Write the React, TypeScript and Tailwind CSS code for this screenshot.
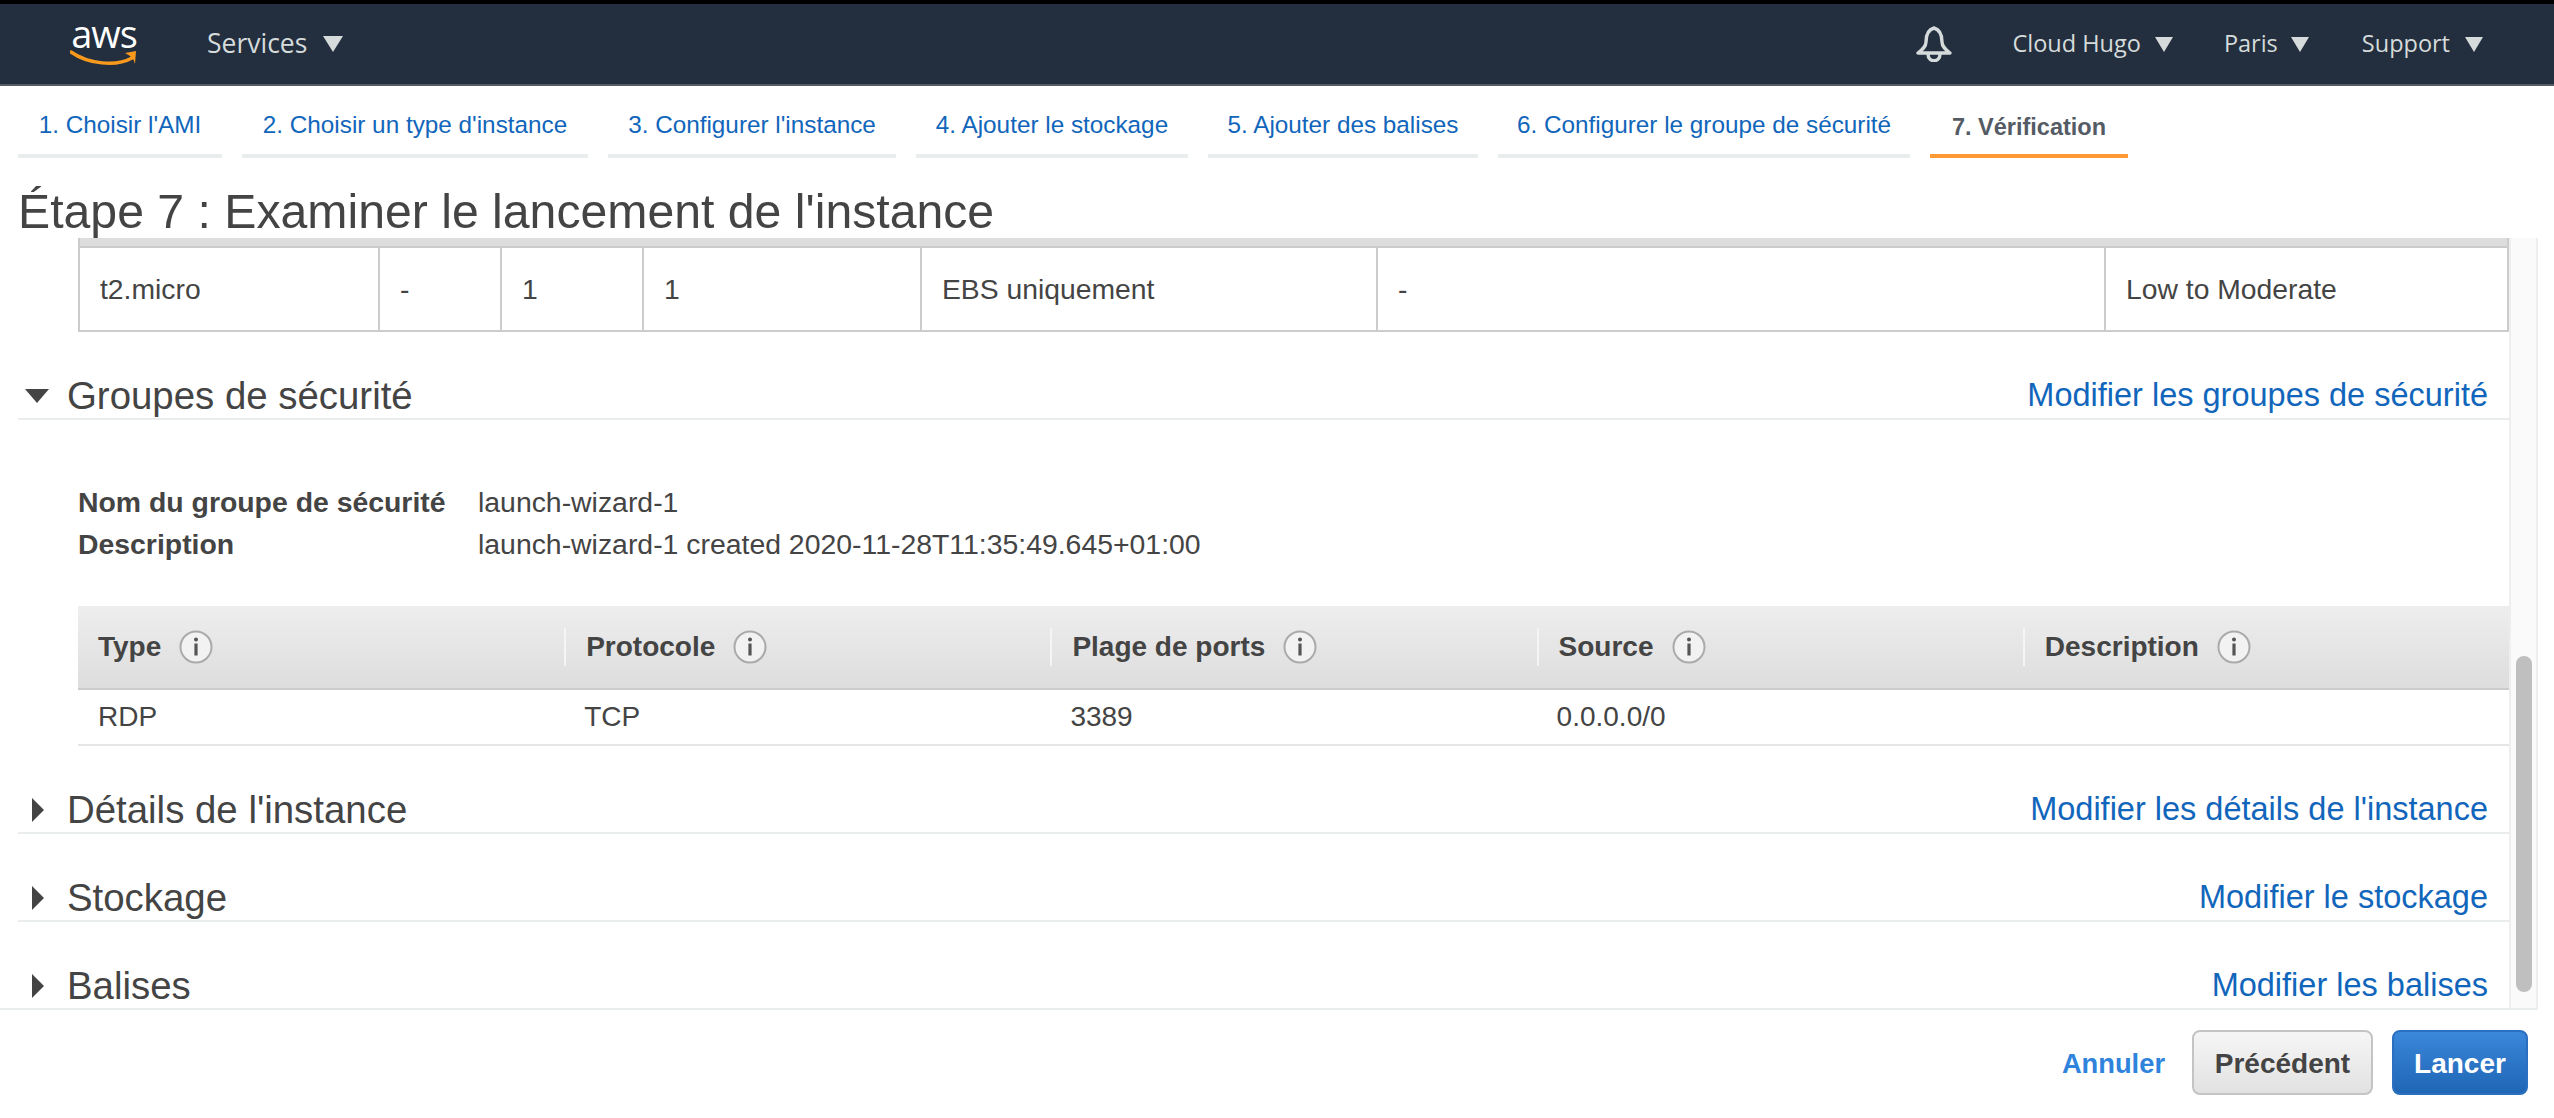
import type { ReactNode } from "react"

const tabs = [
  { label: "1. Choisir l'AMI", width: "w-[204px]" },
  { label: "2. Choisir un type d'instance", width: "w-[346px]" },
  { label: "3. Configurer l'instance", width: "w-[288px]" },
  { label: "4. Ajouter le stockage", width: "w-[272px]" },
  { label: "5. Ajouter des balises", width: "w-[270px]" },
  { label: "6. Configurer le groupe de sécurité", width: "w-[412px]" },
]

const instanceCells = [
  { value: "t2.micro", width: "w-[300px]" },
  { value: "-", width: "w-[122px]" },
  { value: "1", width: "w-[142px]" },
  { value: "1", width: "w-[278px]" },
  { value: "EBS uniquement", width: "w-[456px]" },
  { value: "-", width: "w-[728px]" },
  { value: "Low to Moderate", width: "flex-1" },
]

const ruleHeaders = ["Type", "Protocole", "Plage de ports", "Source", "Description"]
const ruleValues = ["RDP", "TCP", "3389", "0.0.0.0/0", ""]

function Caret() {
  return (
    <svg width="18" height="15" viewBox="0 0 18 15" className="shrink-0">
      <path d="M0 0H18L9 15Z" fill="#d5dbdb" />
    </svg>
  )
}

function AwsLogo() {
  return (
    <div className="flex w-[68px] flex-col items-center">
      <span className="h-[26px] font-['Open_Sans',sans-serif] text-[38px] leading-[24px] tracking-[-1px] text-white">aws</span>
      <svg width="68" height="17" viewBox="0 0 68 17" className="mt-[3px]">
        <path d="M1 2C18 14 46 17 62 8" fill="none" stroke="#f8991d" strokeWidth="3.4" strokeLinecap="round" />
        <path d="M55 3L66 1L65 14C64 9 61 6 55 3Z" fill="#f8991d" />
      </svg>
    </div>
  )
}

function Bell() {
  return (
    <svg width="36" height="36" viewBox="0 0 36 36" fill="none" stroke="#d5dbdb" strokeWidth="3.4">
      <path d="M18 2C11 4 10 10 10 16C10 21 6 24 2 27H34C30 24 26 21 26 16C26 10 25 4 18 2Z" strokeLinejoin="round" />
      <path d="M12 28C12 37 24 37 24 28" />
    </svg>
  )
}

function InfoIcon() {
  return (
    <svg width="34" height="34" viewBox="0 0 34 34" className="shrink-0">
      <circle cx="17" cy="17" r="15.5" fill="#f2f2f2" stroke="#aaaaaa" strokeWidth="2" />
      <circle cx="17" cy="9.5" r="2" fill="#555555" />
      <rect x="15.4" y="13.5" width="3.2" height="12" fill="#555555" />
    </svg>
  )
}

function HeaderMenu({ label, gap }: { label: string; gap: string }) {
  return (
    <div className={`flex items-center ${gap}`}>
      <span className="text-[23.5px] text-[#d5dbdb]">{label}</span>
      <Caret />
    </div>
  )
}

function Section({ title, action, open, children }: { title: string; action: string; open?: boolean; children?: ReactNode }) {
  return (
    <section>
      <div className="flex h-[88px] items-end justify-between border-b-2 border-[#eaeded] pr-[21px]">
        <div className="flex items-center">
          <span className="flex w-[49px] justify-start pl-[7px]">
            {open ? (
              <svg width="24" height="14" viewBox="0 0 24 14">
                <path d="M0 0H24L12 14Z" fill="#444444" />
              </svg>
            ) : (
              <svg width="12" height="24" viewBox="0 0 12 24" className="ml-[7px]">
                <path d="M0 0L12 12L0 24Z" fill="#444444" />
              </svg>
            )}
          </span>
          <h2 className="text-[38.4px] leading-[44px] text-[#444444]">{title}</h2>
        </div>
        <a className="text-[32.5px] leading-[46px] text-[#1166bb]">{action}</a>
      </div>
      {children}
    </section>
  )
}

export default function App() {
  return (
    <div className="flex h-[1118px] w-[2554px] flex-col overflow-hidden border-t-4 border-black bg-white font-['Liberation_Sans',Arial,sans-serif] text-[#444444]">
      <header className="flex h-[82px] shrink-0 items-center justify-between border-b-2 border-[#545b64] bg-[#232f3e] font-['Open_Sans',sans-serif]">
        <div className="flex items-center">
          <div className="ml-[70px]">
            <AwsLogo />
          </div>
          <div className="ml-[69px] flex items-center gap-[16px]">
            <span className="text-[26.5px] text-[#d5dbdb]">Services</span>
            <svg width="20" height="16" viewBox="0 0 20 16">
              <path d="M0 0H20L10 16Z" fill="#d5dbdb" />
            </svg>
          </div>
        </div>
        <div className="mr-[71px] flex items-center">
          <Bell />
          <div className="ml-[60px]">
            <HeaderMenu label="Cloud Hugo" gap="gap-[14px]" />
          </div>
          <div className="ml-[51px]">
            <HeaderMenu label="Paris" gap="gap-[13px]" />
          </div>
          <div className="ml-[53px]">
            <HeaderMenu label="Support" gap="gap-[15px]" />
          </div>
        </div>
      </header>

      <nav className="flex h-[72px] shrink-0 items-end gap-[20px] pl-[18px]">
        {tabs.map((tab) => (
          <a
            key={tab.label}
            className={`flex h-[60px] items-start justify-center whitespace-nowrap border-b-4 border-[#eaeded] pt-[12px] text-[24.3px] leading-[30px] text-[#1166bb] ${tab.width}`}
          >
            {tab.label}
          </a>
        ))}
        <a className="flex h-[60px] w-[198px] items-start justify-center border-b-4 border-[#ff9933] pt-[14px] text-[23.5px] font-bold leading-[30px] text-[#545b64]">
          7. Vérification
        </a>
      </nav>

      <h1 className="h-[80px] shrink-0 pl-[18px] pt-[17px] text-[48.2px] font-normal leading-[72px] text-[#444444]">
        Étape 7 : Examiner le lancement de l'instance
      </h1>

      <div className="flex h-[772px] w-[2538px] shrink-0 border-b-2 border-[#eaeded] pl-[18px]">
        <main className="w-[2491px] shrink-0 overflow-hidden">
          <div className="ml-[60px] border-x-2 border-b-2 border-[#cccccc]">
            <div className="h-[10px] border-b-2 border-[#cccccc] bg-[#dddddd]" />
            <div className="flex h-[82px] items-center text-[28.3px]">
              {instanceCells.map((cell, i) => (
                <div key={i} className={`flex h-full items-center border-r-2 border-[#cccccc] pl-[20px] last:border-r-0 ${cell.width}`}>
                  {cell.value}
                </div>
              ))}
            </div>
          </div>

          <Section title="Groupes de sécurité" action="Modifier les groupes de sécurité" open>
            <div className="ml-[60px] pt-[67px]">
              <div className="grid grid-cols-[400px_1fr] gap-y-[12px] text-[28.4px] leading-[30px]">
                <span className="font-bold">Nom du groupe de sécurité</span>
                <span>launch-wizard-1</span>
                <span className="font-bold">Description</span>
                <span>launch-wizard-1 created 2020-11-28T11:35:49.645+01:00</span>
              </div>
              <div className="mt-[47px] grid h-[84px] grid-cols-5 items-center border-b-2 border-[#cccccc] bg-gradient-to-b from-[#eeeeee] to-[#dddddd]">
                {ruleHeaders.map((header, i) => (
                  <div key={header} className={`flex h-[38px] items-center gap-[18px] pl-[20px] ${i > 0 ? "border-l-2 border-[#f5f5f5]" : ""}`}>
                    <span className="text-[28px] font-bold">{header}</span>
                    <InfoIcon />
                  </div>
                ))}
              </div>
              <div className="grid h-[56px] grid-cols-5 items-center border-b-2 border-[#e5e5e5] text-[28px]">
                {ruleValues.map((value, i) => (
                  <div key={i} className="pl-[20px]">
                    {value}
                  </div>
                ))}
              </div>
            </div>
          </Section>

          <Section title="Détails de l'instance" action="Modifier les détails de l'instance" />
          <Section title="Stockage" action="Modifier le stockage" />
          <Section title="Balises" action="Modifier les balises" />
        </main>

        <div className="h-full w-[29px] shrink-0 border-x-2 border-[#eeeeee] bg-[#fafafa] pl-[5px] pt-[418px]">
          <div className="h-[336px] w-[16px] rounded-full bg-[#bfbfbf]" />
        </div>
      </div>

      <footer className="flex flex-1 items-start justify-end pr-[26px] pt-[20px]">
        <a className="mr-[27px] self-center pb-[20px] text-[27.3px] font-bold text-[#2f83dc]">Annuler</a>
        <button className="h-[65px] w-[181px] rounded-[8px] border-2 border-[#c4c4c4] bg-gradient-to-b from-[#f6f6f6] to-[#e2e2e2] pt-[2px] text-[28px] font-bold text-[#444444]">
          Précédent
        </button>
        <button className="ml-[19px] h-[65px] w-[136px] rounded-[8px] border-2 border-[#2b6fc0] bg-gradient-to-b from-[#3b87da] to-[#1f66b5] pt-[2px] text-[28px] font-bold text-white">
          Lancer
        </button>
      </footer>
    </div>
  )
}
